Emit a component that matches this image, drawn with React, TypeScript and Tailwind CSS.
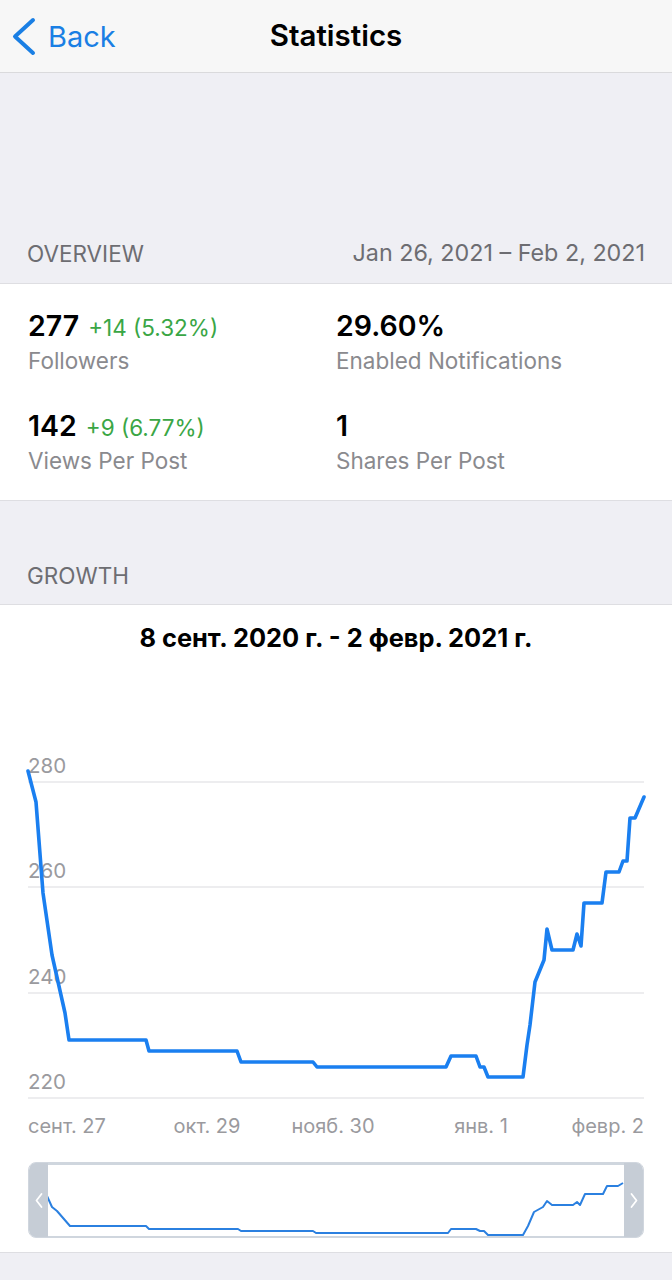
import React from "react";

// main chart line, in page coordinates
const LINE: [number, number][] = [
  [28, 771], [36, 802], [43, 893], [52, 955], [65, 1013], [69, 1040],
  [146, 1040], [149, 1051], [237, 1051], [241, 1062], [313, 1062], [317, 1067],
  [446, 1067], [451, 1056], [476, 1056], [480, 1067], [484, 1067], [488, 1077],
  [523, 1077], [527, 1045], [530, 1025], [535, 982], [544, 960], [547, 929],
  [552, 950], [573, 950], [577, 934], [581, 946], [584, 903], [602, 903],
  [606, 872], [619, 872], [623, 861], [627, 861], [630, 818], [635, 818], [644, 797],
];

// overview line in the range selector, page coordinates
const MINI_PAGE: [number, number][] = [
  [47, 1196], [52, 1207], [57, 1211], [70, 1226], [146, 1226], [149, 1229],
  [238, 1229], [241, 1231], [313, 1231], [316, 1233], [448, 1233], [451, 1229],
  [476, 1229], [480, 1231], [484, 1231], [488, 1235], [523, 1235], [528, 1226],
  [534, 1212], [543, 1207], [547, 1201], [552, 1205], [573, 1205], [577, 1202],
  [580, 1205], [585, 1194], [603, 1194], [607, 1186], [618, 1186], [623, 1183],
];
const MINI = MINI_PAGE.map(([x, y]) => [x - 29, y - 1163]) as [number, number][];

const GRID = [
  { y: 782, label: "280" },
  { y: 887, label: "260" },
  { y: 993, label: "240" },
  { y: 1098, label: "220" },
];

const X_LABELS = [
  { x: 28, label: "сент. 27", anchor: "start" },
  { x: 207, label: "окт. 29", anchor: "middle" },
  { x: 333, label: "нояб. 30", anchor: "middle" },
  { x: 481, label: "янв. 1", anchor: "middle" },
  { x: 644, label: "февр. 2", anchor: "end" },
];

const FONT = { fontFamily: "Inter, 'Noto Sans', sans-serif" };

function toPoints(pts: [number, number][]) {
  return pts.map(([x, y]) => `${x},${y}`).join(" ");
}

function Stat({ value, delta, label }: { value: string; delta?: string; label: string }) {
  return (
    <div className="flex flex-col">
      <div className="flex items-baseline gap-[9px] h-[32px]">
        <span className="text-[28.5px] font-semibold text-black leading-none">{value}</span>
        {delta && <span className="text-[22.5px] text-[#3aa645] leading-none">{delta}</span>}
      </div>
      <span className="text-[22.5px] text-[#8a8a8e] leading-[34px]">{label}</span>
    </div>
  );
}

export default function App() {
  return (
    <div className="w-[672px] h-[1280px] bg-[#efeff4] overflow-hidden" style={FONT}>
      {/* Nav bar */}
      <header className="h-[73px] bg-[#f7f7f7] border-b border-[#dadadc] grid grid-cols-[1fr_auto_1fr] items-center">
        <div className="flex items-center pl-[11px] gap-[12px] text-[#1a7fe4]">
          <svg viewBox="0 0 25 41" className="w-[25px] h-[41px]" fill="none">
            <path d="M22 4L4 20.5L22 37" stroke="currentColor" strokeWidth="4" strokeLinecap="round" strokeLinejoin="round" />
          </svg>
          <span className="text-[29px] leading-none">Back</span>
        </div>
        <h1 className="text-[29.5px] font-semibold text-black leading-none">Statistics</h1>
        <div />
      </header>

      {/* Overview header */}
      <div className="h-[210px] flex items-end justify-between px-[27px] pb-[12px] text-[22.5px] text-[#6d6d72]">
        <span>OVERVIEW</span>
        <span className="text-[23.3px]">Jan 26, 2021 – Feb 2, 2021</span>
      </div>

      {/* Overview stats */}
      <section className="bg-white border-y border-[#dedee2] h-[218px] grid grid-cols-[308px_1fr] gap-y-[34px] pl-[28px] pt-[28px] content-start">
        <Stat value="277" delta="+14 (5.32%)" label="Followers" />
        <Stat value="29.60%" label="Enabled Notifications" />
        <Stat value="142" delta="+9 (6.77%)" label="Views Per Post" />
        <Stat value="1" label="Shares Per Post" />
      </section>

      {/* Growth header */}
      <div className="h-[103px] flex items-end px-[27px] pb-[11px] text-[22.5px] text-[#6d6d72]">
        <span>GROWTH</span>
      </div>

      {/* Growth chart */}
      <section className="bg-white border-y border-[#dedee2] h-[649px] flex flex-col">
        <h2 className="text-center text-[25.4px] font-bold text-black pt-[17px] leading-[32px]">
          8 сент. 2020 г. - 2 февр. 2021 г.
        </h2>
        <svg viewBox="0 684 672 460" className="w-[672px] h-[460px] mt-[30px] shrink-0">
          {GRID.map((g) => (
            <g key={g.label}>
              <line x1={28} x2={644} y1={g.y} y2={g.y} stroke="#dcdcdf" strokeWidth={1.2} />
              <text x={28} y={g.y - 9} fontSize={20.5} fill="#9a9a9e" style={FONT}>{g.label}</text>
            </g>
          ))}
          <polyline
            points={toPoints(LINE)}
            fill="none"
            stroke="#1a7ff0"
            strokeWidth={3.6}
            strokeLinejoin="round"
            strokeLinecap="round"
          />
          {X_LABELS.map((l) => (
            <text
              key={l.label}
              x={l.x}
              y={1133}
              fontSize={20}
              fill="#9a9a9e"
              textAnchor={l.anchor as "start" | "middle" | "end"}
              style={FONT}
            >
              {l.label}
            </text>
          ))}
        </svg>

        {/* Range selector */}
        <div className="mx-[28px] mt-[18px] h-[76px] shrink-0 relative rounded-[8px] border border-[#d0d6de] overflow-hidden bg-white">
          <svg viewBox="0 0 614 74" className="absolute inset-0 w-full h-full">
            <polyline points={toPoints(MINI)} fill="none" stroke="#2b80e0" strokeWidth={2} strokeLinejoin="round" />
          </svg>
          <div className="absolute inset-x-0 top-0 h-[1.5px] bg-[#cfd6de]" />
          <div className="absolute inset-x-0 bottom-0 h-[1.5px] bg-[#cfd6de]" />
          <div className="absolute left-0 top-0 bottom-0 w-[19px] bg-[#c6cdd6] flex items-center justify-center">
            <svg viewBox="0 0 8 16" className="w-[8px] h-[17px]" fill="none">
              <path d="M6.5 1.5L1.5 8L6.5 14.5" stroke="white" strokeWidth="1.8" strokeLinecap="round" strokeLinejoin="round" />
            </svg>
          </div>
          <div className="absolute right-0 top-0 bottom-0 w-[19px] bg-[#c6cdd6] flex items-center justify-center">
            <svg viewBox="0 0 8 16" className="w-[8px] h-[17px]" fill="none">
              <path d="M1.5 1.5L6.5 8L1.5 14.5" stroke="white" strokeWidth="1.8" strokeLinecap="round" strokeLinejoin="round" />
            </svg>
          </div>
        </div>
      </section>
    </div>
  );
}
